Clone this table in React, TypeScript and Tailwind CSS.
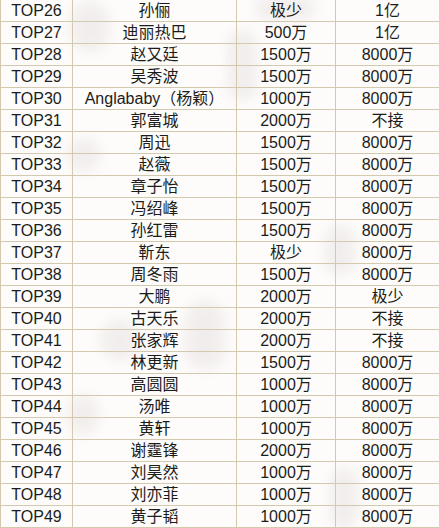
import React from "react";

const rows: [string, string, string, string][] = [
    ["TOP26", "孙俪", "极少", "1亿"],
    ["TOP27", "迪丽热巴", "500万", "1亿"],
    ["TOP28", "赵又廷", "1500万", "8000万"],
    ["TOP29", "吴秀波", "1500万", "8000万"],
    ["TOP30", "Anglababy（杨颖）", "1000万", "8000万"],
    ["TOP31", "郭富城", "2000万", "不接"],
    ["TOP32", "周迅", "1500万", "8000万"],
    ["TOP33", "赵薇", "1500万", "8000万"],
    ["TOP34", "章子怡", "1500万", "8000万"],
    ["TOP35", "冯绍峰", "1500万", "8000万"],
    ["TOP36", "孙红雷", "1500万", "8000万"],
    ["TOP37", "靳东", "极少", "8000万"],
    ["TOP38", "周冬雨", "1500万", "8000万"],
    ["TOP39", "大鹏", "2000万", "极少"],
    ["TOP40", "古天乐", "2000万", "不接"],
    ["TOP41", "张家辉", "2000万", "不接"],
    ["TOP42", "林更新", "1500万", "8000万"],
    ["TOP43", "高圆圆", "1000万", "8000万"],
    ["TOP44", "汤唯", "1000万", "8000万"],
    ["TOP45", "黄轩", "1000万", "8000万"],
    ["TOP46", "谢霆锋", "2000万", "8000万"],
    ["TOP47", "刘昊然", "1000万", "8000万"],
    ["TOP48", "刘亦菲", "1000万", "8000万"],
    ["TOP49", "黄子韬", "1000万", "8000万"],
];

// faint blurred watermark blobs scattered over the sheet
const marks = [
    "left-[70px] top-[2px] w-[40px] h-[50px]",
    "left-[255px] top-[-4px] w-[60px] h-[24px]",
    "left-[228px] top-[30px] w-[28px] h-[70px]",
    "left-[68px] top-[138px] w-[32px] h-[34px]",
    "left-[325px] top-[225px] w-[30px] h-[50px]",
    "left-[185px] top-[300px] w-[40px] h-[70px]",
    "left-[100px] top-[320px] w-[40px] h-[40px]",
    "left-[68px] top-[395px] w-[30px] h-[40px]",
    "left-[330px] top-[468px] w-[28px] h-[60px]",
];

export default function App() {
    return (
        <div
            className="relative w-[439px] h-[528px] overflow-hidden bg-[#fdfcfa] text-[#1c1c1c]"
            style={{ fontFamily: '"Liberation Sans", "Noto Sans CJK SC", sans-serif' }}>
            {marks.map((m) => (
                <div
                    key={m}
                    className={`pointer-events-none absolute rounded-full bg-[#e6e0e0] opacity-50 blur-[6px] ${m}`}
                />
            ))}
            <div className="relative -mt-px border-l border-t border-[#d3c9ae] w-[439px]">
                {rows.map(([rank, name, a, b]) => (
                    <div
                        key={rank}
                        className="grid grid-cols-[72px_164px_99px_104px] h-[22px] border-b border-[#d3c9ae] text-[16px] leading-[21px]">
                        <div className="border-r border-[#d3c9ae] text-center">{rank}</div>
                        <div className="border-r border-[#d3c9ae] text-center whitespace-nowrap">{name}</div>
                        <div className="border-r border-[#d3c9ae] text-center">{a}</div>
                        <div className="border-r border-[#d3c9ae] text-center">{b}</div>
                    </div>
                ))}
            </div>
        </div>
    );
}
